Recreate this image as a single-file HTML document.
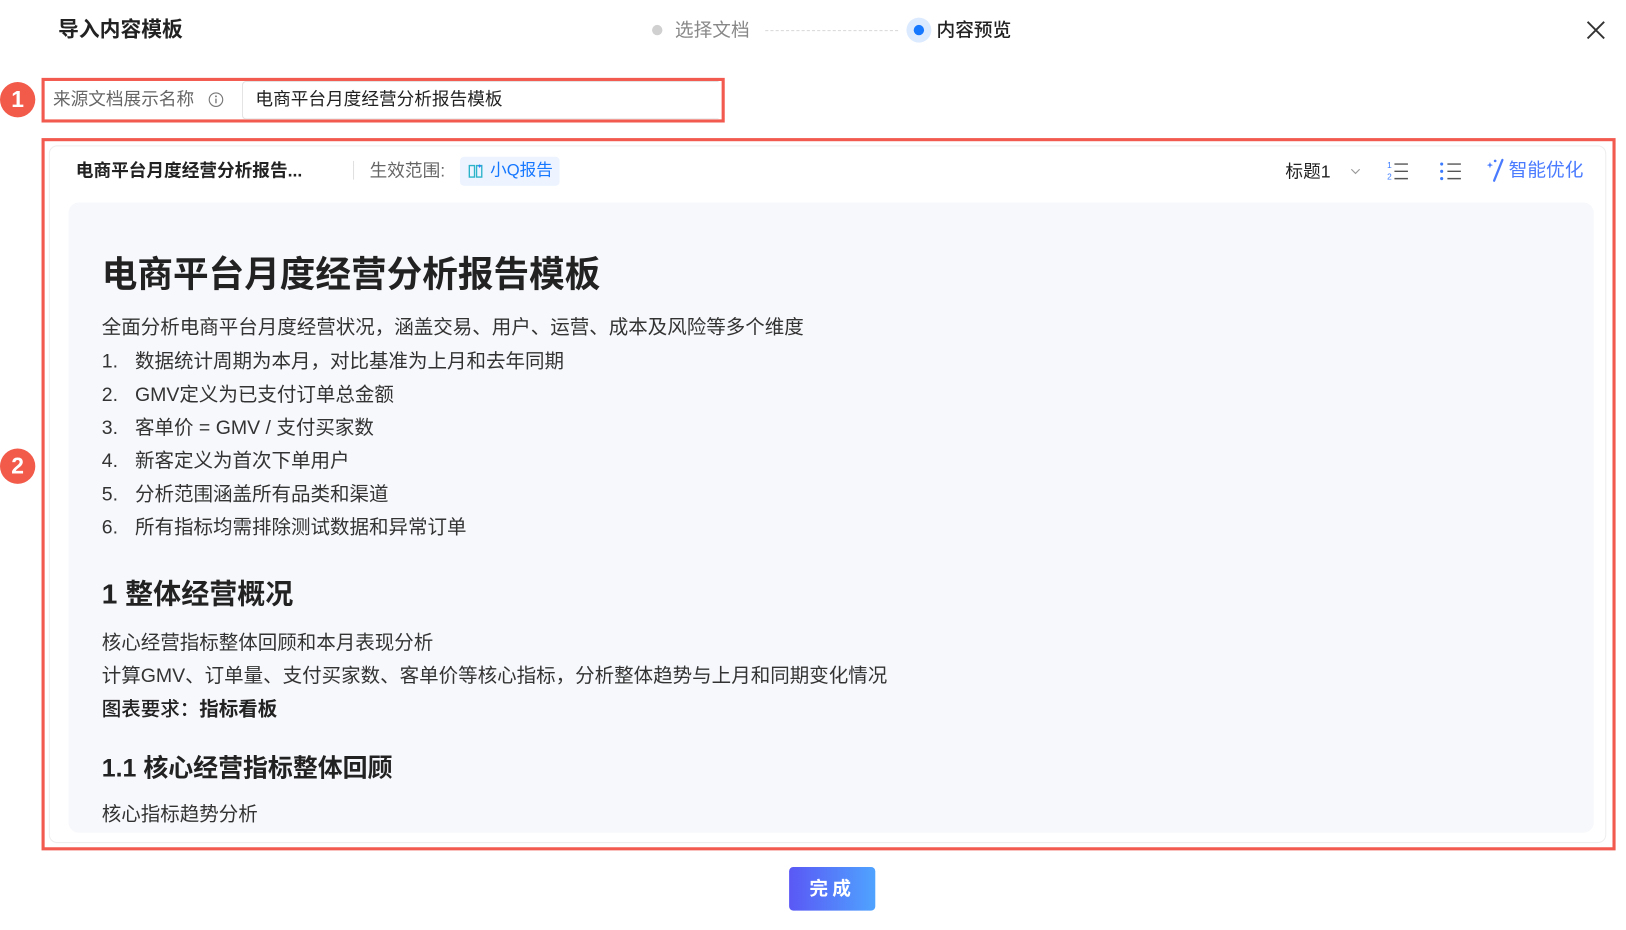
<!DOCTYPE html>
<html><head><meta charset="utf-8"><style>
html,body{margin:0;padding:0;width:1626px;height:930px;overflow:hidden;background:#fff;}
#w{position:absolute;left:0;top:0;width:1566px;height:896px;transform:scale(1.0383);transform-origin:0 0;font-family:"Liberation Sans","Noto Sans CJK SC",sans-serif;color:#222;}
.a{position:absolute;white-space:nowrap;}
.m{line-height:1;}
.badge{position:absolute;width:34px;height:34px;border-radius:50%;background:#f25a4a;color:#fff;font-size:22px;font-weight:bold;text-align:center;line-height:34px;}
.body{font-size:18.8px;color:#333;}
</style></head><body><div id="w">
<div class="a m" style="left:56px;top:19px;font-size:20px;font-weight:bold;color:#222">导入内容模板</div>
<div class="a" style="left:628px;top:24px;width:10px;height:10px;border-radius:50%;background:#d0d0d0"></div>
<div class="a m" style="left:650px;top:20px;font-size:18px;color:#888">选择文档</div>
<div class="a" style="left:737px;top:29px;width:128px;border-top:1px dashed #d8d8d8"></div>
<div class="a" style="left:873px;top:17px;width:24px;height:24px;border-radius:50%;background:#dceaff"></div>
<div class="a" style="left:880px;top:24px;width:10px;height:10px;border-radius:50%;background:#1677ff"></div>
<div class="a m" style="left:902px;top:20px;font-size:18px;color:#222;font-weight:500">内容预览</div>
<svg class="a" style="left:1528px;top:20px" width="18" height="18" viewBox="0 0 18 18"><path d="M1 1L17 17M17 1L1 17" stroke="#333" stroke-width="1.8"/></svg>

<div class="badge" style="left:0px;top:79px">1</div>
<div class="badge" style="left:0px;top:432px">2</div>

<div class="a" style="left:40px;top:75px;width:652px;height:37px;border:3px solid #f25a4f"></div>
<div class="a m" style="left:51px;top:87px;font-size:17px;color:#666">来源文档展示名称</div>
<svg class="a" style="left:200px;top:88px" width="16" height="16" viewBox="0 0 16 16"><circle cx="8" cy="8" r="6.5" fill="none" stroke="#777" stroke-width="1.1"/><path d="M8 7v4.5" stroke="#777" stroke-width="1.3"/><circle cx="8" cy="4.8" r=".9" fill="#777"/></svg>
<div class="a" style="left:233px;top:78px;width:458px;height:35px;border:1px solid #e3e3e3;border-right:none;border-radius:4px 0 0 4px;background:#fff"></div>
<div class="a m" style="left:246px;top:87px;font-size:17px;color:#222">电商平台月度经营分析报告模板</div>

<div class="a" style="left:40px;top:133px;width:1510px;height:680px;border:3px solid #f25a4f"></div>
<div class="a" style="left:47px;top:140px;width:1498px;height:670px;border:1px solid #eee;border-radius:8px"></div>
<div class="a m" style="left:73px;top:156px;font-size:17px;font-weight:bold;color:#222">电商平台月度经营分析报告...</div>
<div class="a" style="left:340px;top:155px;width:1px;height:18px;background:#e0e0e0"></div>
<div class="a m" style="left:356px;top:156px;font-size:17px;color:#666">生效范围:</div>
<div class="a" style="left:443px;top:151px;width:96px;height:28px;border-radius:4px;background:#eef4ff"></div>
<svg class="a" style="left:450px;top:157px" width="16" height="16" viewBox="0 0 16 16"><path d="M2 2.5h5v11H2zM9 2.5h5v11H9z" fill="none" stroke="#2bb3c9" stroke-width="1.3"/><path d="M12 1l.6 1.4L14 3l-1.4.6L12 5l-.6-1.4L10 3l1.4-.6z" fill="#2b7cff"/></svg>
<div class="a m" style="left:472px;top:157px;font-size:16px;color:#1677ff">小Q报告</div>

<div class="a m" style="left:1238px;top:157px;font-size:17px;color:#222">标题1</div>
<svg class="a" style="left:1300px;top:161px" width="11" height="8" viewBox="0 0 11 8"><path d="M1.5 2l4 4 4-4" fill="none" stroke="#999" stroke-width="1.1"/></svg>
<svg class="a" style="left:1335px;top:154px" width="22" height="22" viewBox="0 0 22 22"><text x="1" y="8" font-size="8" fill="#3b7bff" font-family="Liberation Sans">1</text><text x="1" y="19" font-size="8" fill="#3b7bff" font-family="Liberation Sans">2</text><path d="M8 4h13M8 11h13M8 18h13" stroke="#555" stroke-width="1.4"/></svg>
<svg class="a" style="left:1386px;top:154px" width="22" height="22" viewBox="0 0 22 22"><circle cx="2.5" cy="4" r="1.5" fill="#3b7bff"/><circle cx="2.5" cy="11" r="1.5" fill="#3b7bff"/><circle cx="2.5" cy="18" r="1.5" fill="#3b7bff"/><path d="M8 4h13M8 11h13M8 18h13" stroke="#555" stroke-width="1.4"/></svg>
<svg class="a" style="left:1430px;top:152px" width="20" height="24" viewBox="0 0 20 24"><path d="M17 2L9 22" stroke="#4a7bff" stroke-width="2.2" stroke-linecap="round"/><path d="M5 4l.8 2.2L8 7l-2.2.8L5 10l-.8-2.2L2 7l2.2-.8z" fill="#4a7bff"/><circle cx="10" cy="3" r="1.3" fill="#4a7bff"/></svg>
<div class="a m" style="left:1453px;top:155px;font-size:18px;color:#4a7bff">智能优化</div>

<div class="a" style="left:66px;top:195px;width:1469px;height:607px;border-radius:10px;background:#f7f8fc"></div>
<div class="a m" style="left:98px;top:248px;font-size:34.3px;font-weight:bold;color:#222">电商平台月度经营分析报告模板</div>
<div class="a m body" style="left:98px;top:306px">全面分析电商平台月度经营状况，涵盖交易、用户、运营、成本及风险等多个维度</div>
<div class="a m body" style="left:98px;top:339px">1.</div><div class="a m body" style="left:130px;top:339px">数据统计周期为本月，对比基准为上月和去年同期</div>
<div class="a m body" style="left:98px;top:371px">2.</div><div class="a m body" style="left:130px;top:371px">GMV定义为已支付订单总金额</div>
<div class="a m body" style="left:98px;top:403px">3.</div><div class="a m body" style="left:130px;top:403px">客单价 = GMV / 支付买家数</div>
<div class="a m body" style="left:98px;top:435px">4.</div><div class="a m body" style="left:130px;top:435px">新客定义为首次下单用户</div>
<div class="a m body" style="left:98px;top:467px">5.</div><div class="a m body" style="left:130px;top:467px">分析范围涵盖所有品类和渠道</div>
<div class="a m body" style="left:98px;top:499px">6.</div><div class="a m body" style="left:130px;top:499px">所有指标均需排除测试数据和异常订单</div>

<div class="a m" style="left:98px;top:559px;font-size:27px;font-weight:bold;color:#222">1 整体经营概况</div>
<div class="a m body" style="left:98px;top:610px">核心经营指标整体回顾和本月表现分析</div>
<div class="a m body" style="left:98px;top:642px">计算GMV、订单量、支付买家数、客单价等核心指标，分析整体趋势与上月和同期变化情况</div>
<div class="a m body" style="left:98px;top:674px;color:#222;font-weight:500">图表要求：<b>指标看板</b></div>
<div class="a m" style="left:98px;top:729px;font-size:24px;font-weight:bold;color:#222">1.1 核心经营指标整体回顾</div>
<div class="a m body" style="left:98px;top:775px">核心指标趋势分析</div>

<div class="a" style="left:760px;top:835px;width:83px;height:42px;border-radius:4px;background:linear-gradient(90deg,#5a58f5,#4fa3ff);color:#fff;font-size:18px;font-weight:bold;text-align:center;line-height:42px;letter-spacing:4px">完成</div>
</div></body></html>
